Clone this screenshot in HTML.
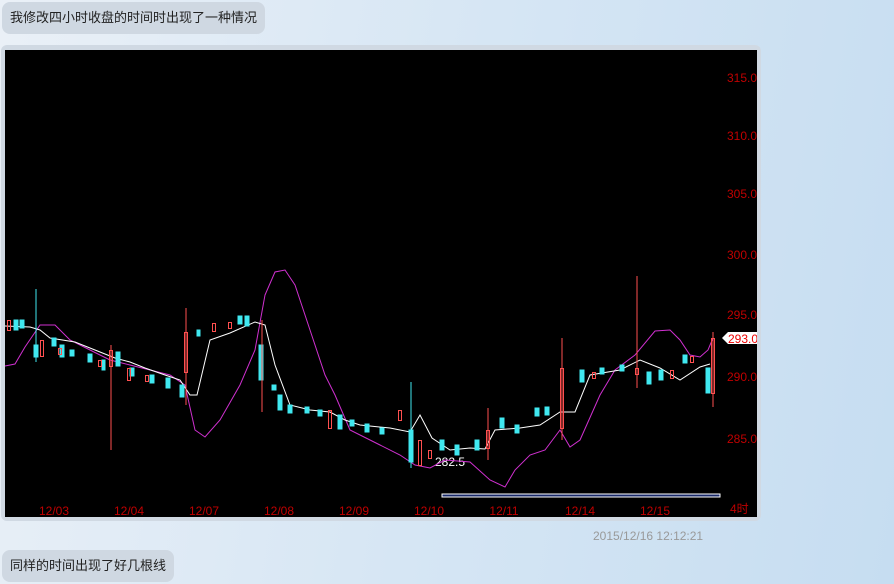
<!DOCTYPE html>
<html><head><meta charset="utf-8"><style>
*{margin:0;padding:0}
body{width:894px;height:584px;overflow:hidden;background:linear-gradient(100deg,#eaf0f7 0%,#d6e6f4 50%,#c6ddf1 100%);font-family:"Liberation Sans","Noto Sans CJK SC",sans-serif;position:relative}
.b{position:absolute;background:#cfd8e2;border-radius:8px;font-size:13px;color:#222;line-height:32px;height:32px;padding:0 8px;white-space:nowrap}
.frame{position:absolute;left:1px;top:45px;width:760px;height:476px;background:#d0d9e3;border-radius:6px}
.ts{position:absolute;left:593px;top:529px;font-size:12px;color:#999}
</style></head><body>
<div class="b" style="left:2px;top:2px">我修改四小时收盘的时间时出现了一种情况</div>
<div class="frame"></div>
<svg style="position:absolute;left:5px;top:50px" width="752" height="467" viewBox="5 50 752 467">
<rect x="5" y="50" width="752" height="467" fill="#000"/>
<g fill="#c00000" font-size="12" font-family="Liberation Sans,sans-serif">
<text x="727" y="82">315.0</text><text x="727" y="140">310.0</text><text x="727" y="198">305.0</text><text x="727" y="259">300.0</text><text x="727" y="319">295.0</text><text x="727" y="381">290.0</text><text x="727" y="443">285.0</text>
<g text-anchor="middle"><text x="54" y="515">12/03</text><text x="129" y="515">12/04</text><text x="204" y="515">12/07</text><text x="279" y="515">12/08</text><text x="354" y="515">12/09</text><text x="429" y="515">12/10</text><text x="504" y="515">12/11</text><text x="580" y="515">12/14</text><text x="655" y="515">12/15</text></g>
<text x="730" y="513">4时</text></g>
<polygon points="722,338 728,332 757,332 757,344 728,344" fill="#fff"/>
<text x="728" y="343" fill="#e00" font-size="12" font-family="Liberation Sans,sans-serif">293.0</text>
<text x="435" y="466" fill="#fff" font-size="12" font-family="Liberation Sans,sans-serif">282.5</text>
<rect x="442" y="494" width="278" height="3" fill="#1a2a6a" stroke="#fff" stroke-width="1"/>
<polyline fill="none" stroke="#d030d0" stroke-width="1" points="5,366 15,364 25,347 40,325 55,325 70,340 90,350 110,360 130,365 150,370 170,375 185,385 195,430 205,437 220,420 240,385 255,350 265,295 275,272 285,270 295,285 310,330 325,375 335,395 350,430 380,445 400,455 415,465 430,468 445,460 470,462 490,480 505,487 515,470 530,455 545,450 560,430 570,447 580,440 600,395 615,370 635,355 655,331 670,330 680,340 690,355 700,357 708,350 713,338"/>
<polyline fill="none" stroke="#fff" stroke-width="1" points="5,326 30,327 40,330 50,338 75,342 95,350 115,358 130,362 145,368 165,375 180,380 190,395 197,395 210,340 230,333 255,322 265,325 275,365 290,405 310,410 330,412 345,420 360,425 390,428 410,432 420,415 432,438 450,450 470,448 485,449 495,430 520,428 540,425 560,412 575,412 590,375 620,370 640,360 660,368 680,380 700,367 710,364"/>
<g stroke-width="1">
<g stroke="#40e8f0" fill="#40e8f0">
<line x1="36" y1="289" x2="36" y2="362"/><rect x="34" y="345" width="4" height="12"/><rect x="14" y="320" width="4" height="10"/><rect x="20" y="320" width="4" height="8"/><rect x="52" y="338" width="4" height="8"/><rect x="60" y="345" width="4" height="12"/><rect x="70" y="350" width="4" height="6"/><rect x="88" y="354" width="4" height="8"/><rect x="102" y="360" width="3" height="10"/><rect x="116" y="352" width="4" height="14"/><rect x="130" y="368" width="4" height="8"/><rect x="150" y="375" width="4" height="8"/><rect x="166" y="378" width="4" height="10"/><rect x="180" y="385" width="4" height="12"/><rect x="197" y="330" width="3" height="6"/><rect x="238" y="316" width="4" height="8"/><rect x="245" y="316" width="4" height="10"/><rect x="259" y="345" width="4" height="35"/><rect x="272" y="385" width="4" height="5"/><rect x="278" y="395" width="4" height="15"/><rect x="288" y="405" width="4" height="8"/><rect x="305" y="407" width="4" height="6"/><rect x="318" y="410" width="4" height="6"/><rect x="338" y="415" width="4" height="14"/><rect x="350" y="420" width="4" height="6"/><rect x="365" y="424" width="4" height="8"/><rect x="380" y="428" width="4" height="6"/><line x1="411" y1="382" x2="411" y2="468"/><rect x="409" y="430" width="4" height="32"/><rect x="440" y="440" width="4" height="10"/><rect x="455" y="445" width="4" height="10"/><rect x="475" y="440" width="4" height="10"/><rect x="500" y="418" width="4" height="10"/><rect x="515" y="425" width="4" height="8"/><rect x="535" y="408" width="4" height="8"/><rect x="545" y="407" width="4" height="8"/><rect x="580" y="370" width="4" height="12"/><rect x="600" y="368" width="4" height="6"/><rect x="620" y="365" width="4" height="6"/><rect x="647" y="372" width="4" height="12"/><rect x="659" y="370" width="4" height="10"/><rect x="683" y="355" width="4" height="8"/><rect x="706" y="368" width="4" height="25"/></g>
<g stroke="#ff5050" fill="none">
<rect x="7.5" y="320.5" width="3" height="10"/><rect x="40.5" y="340.5" width="3" height="16"/><rect x="58.5" y="348.5" width="3" height="6"/><rect x="98.5" y="360.5" width="3" height="6"/><line x1="111" y1="345" x2="111" y2="450"/><rect x="109.5" y="350.5" width="3" height="16"/><rect x="127.5" y="368.5" width="3" height="12"/><rect x="145.5" y="375.5" width="3" height="6"/><line x1="186" y1="308" x2="186" y2="405"/><rect x="184.5" y="332.5" width="3" height="40"/><rect x="212.5" y="323.5" width="3" height="8"/><rect x="228.5" y="322.5" width="3" height="6"/><line x1="262" y1="320" x2="262" y2="412"/><rect x="328.5" y="410.5" width="3" height="18"/><rect x="398.5" y="410.5" width="3" height="10"/><rect x="418.5" y="440.5" width="3" height="25"/><rect x="428.5" y="450.5" width="3" height="8"/><line x1="488" y1="408" x2="488" y2="460"/><rect x="486.5" y="430.5" width="3" height="18"/><line x1="562" y1="338" x2="562" y2="440"/><rect x="560.5" y="368.5" width="3" height="60"/><rect x="592.5" y="372.5" width="3" height="6"/><line x1="637" y1="276" x2="637" y2="388"/><rect x="635.5" y="368.5" width="3" height="6"/><rect x="670.5" y="370.5" width="3" height="8"/><rect x="690.5" y="356.5" width="3" height="6"/><line x1="713" y1="332" x2="713" y2="407"/><rect x="711.5" y="338.5" width="3" height="55"/></g>
</g>
</svg>
<div class="ts">2015/12/16 12:12:21</div>
<div class="b" style="left:2px;top:550px">同样的时间出现了好几根线</div>
</body></html>
